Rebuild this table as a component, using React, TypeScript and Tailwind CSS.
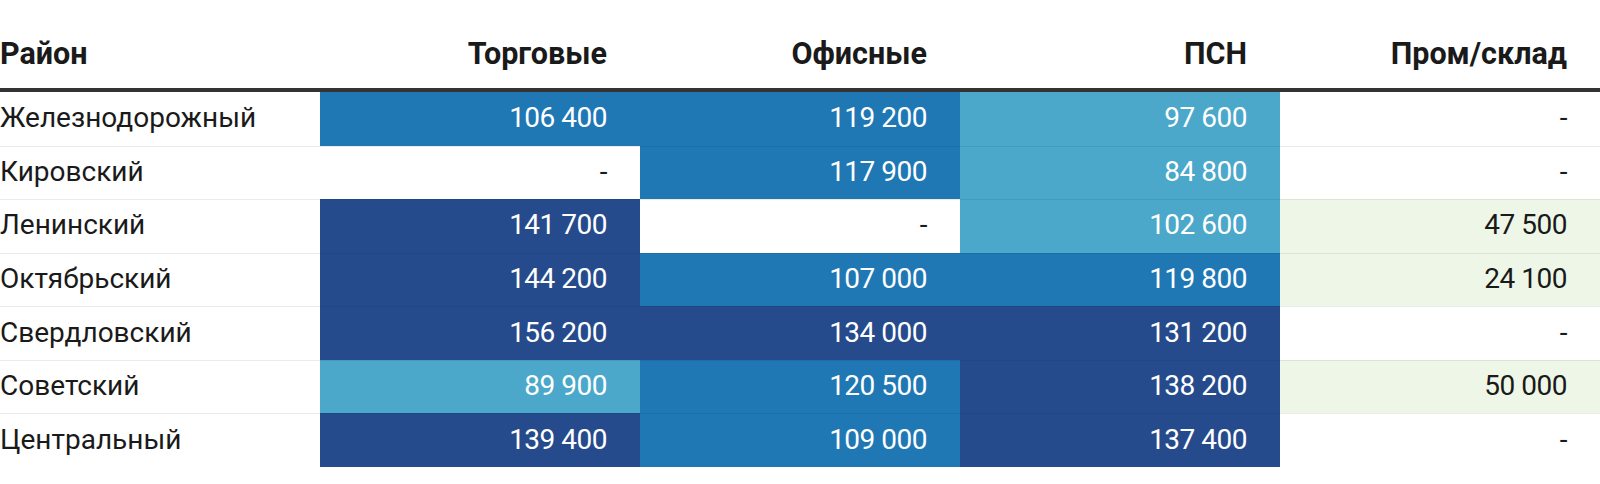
import React from "react";

type Cell = { v: string; c: "d" | "m" | "l" | "g" | "w" };

const bg: Record<Cell["c"], string> = {
  d: "bg-[#264b8c] text-white",
  m: "bg-[#1f78b4] text-white",
  l: "bg-[#4ba8ca] text-white",
  g: "bg-[#eef7e7] text-[#1a1a1a]",
  w: "bg-white text-[#1a1a1a]",
};

const rows: { name: string; cells: Cell[] }[] = [
  { name: "Железнодорожный", cells: [{ v: "106 400", c: "m" }, { v: "119 200", c: "m" }, { v: "97 600", c: "l" }, { v: "-", c: "w" }] },
  { name: "Кировский", cells: [{ v: "-", c: "w" }, { v: "117 900", c: "m" }, { v: "84 800", c: "l" }, { v: "-", c: "w" }] },
  { name: "Ленинский", cells: [{ v: "141 700", c: "d" }, { v: "-", c: "w" }, { v: "102 600", c: "l" }, { v: "47 500", c: "g" }] },
  { name: "Октябрьский", cells: [{ v: "144 200", c: "d" }, { v: "107 000", c: "m" }, { v: "119 800", c: "m" }, { v: "24 100", c: "g" }] },
  { name: "Свердловский", cells: [{ v: "156 200", c: "d" }, { v: "134 000", c: "d" }, { v: "131 200", c: "d" }, { v: "-", c: "w" }] },
  { name: "Советский", cells: [{ v: "89 900", c: "l" }, { v: "120 500", c: "m" }, { v: "138 200", c: "d" }, { v: "50 000", c: "g" }] },
  { name: "Центральный", cells: [{ v: "139 400", c: "d" }, { v: "109 000", c: "m" }, { v: "137 400", c: "d" }, { v: "-", c: "w" }] },
];

const headers = ["Торговые", "Офисные", "ПСН", "Пром/склад"];

export default function App() {
  return (
    <div className="w-[1600px] h-[484px] bg-white font-['Roboto',sans-serif] text-[#1a1a1a]">
      <div className="grid grid-cols-5 h-[88px] items-end border-b-4 border-[#333333] box-content">
        <div className="pb-[16px] text-[30.5px] leading-[36px] font-bold">Район</div>
        {headers.map((h) => (
          <div key={h} className="pb-[16px] pr-[33px] text-right text-[30.5px] leading-[36px] font-bold">
            {h}
          </div>
        ))}
      </div>
      {rows.map((r, i) => (
        <div key={r.name} className="grid grid-cols-5">
          <div
            className={`h-[53.57px] pb-[2px] flex items-center text-[28px] ${i > 0 ? "border-t border-[rgba(0,0,0,0.08)]" : ""}`}
          >
            {r.name}
          </div>
          {r.cells.map((c, j) => (
            <div
              key={j}
              className={`h-[53.57px] pb-[2px] flex items-center justify-end pr-[33px] text-[28px] tracking-[-0.5px] ${bg[c.c]} ${i > 0 ? "border-t border-[rgba(0,0,0,0.08)]" : ""}`}
            >
              {c.v}
            </div>
          ))}
        </div>
      ))}
    </div>
  );
}
